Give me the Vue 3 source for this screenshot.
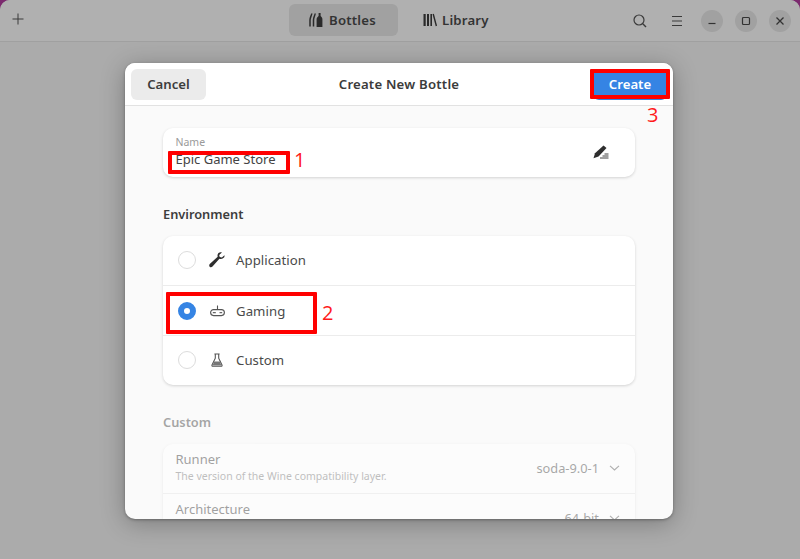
<script setup>
const envRows = [
  { label: 'Application', icon: 'wrench', checked: false },
  { label: 'Gaming', icon: 'game', checked: true },
  { label: 'Custom', icon: 'flask', checked: false },
]
</script>

<template>
  <div class="window">
    <header class="topbar">
      <button class="plus" aria-label="New">
        <svg width="12" height="12" viewBox="0 0 12 12"><path d="M6 0.5v11M0.5 6h11" stroke="#3a3a3a" stroke-width="1" fill="none"/></svg>
      </button>
      <nav class="tabs">
        <div class="tab active">
          <svg width="14" height="16" viewBox="0 0 14 16"><path d="M2.800 1.500C2.400 4 1 5.500 1 8v6.500M6.200 1.500C5.800 4 4.500 5.500 4.500 8v6.500" stroke="#2a2a2a" stroke-width="1.500" fill="none"/><path d="M9.600 1h2v3c1.100.8 1.800 2 1.800 3.300V15H7.600V7.300c0-1.300.9-2.500 2-3.300z" fill="#2a2a2a"/></svg>
          <span>Bottles</span>
        </div>
        <div class="tab lib">
          <svg width="14" height="14" viewBox="0 0 14 14"><path d="M.5 1v12h2.200V1zM4 1v12h2V1zM7.400 1v12h1.600V1z" fill="#2a2a2a"/><path d="M10.200 1l3.200 12" stroke="#2a2a2a" stroke-width="1.400" fill="none"/></svg>
          <span>Library</span>
        </div>
      </nav>
      <div class="actions">
        <svg class="search" width="14" height="14" viewBox="0 0 14 14"><circle cx="6" cy="6" r="5" stroke="#3a3a3a" stroke-width="1.200" fill="none"/><path d="M9.800 9.800L13 13" stroke="#3a3a3a" stroke-width="1.400" fill="none"/></svg>
        <svg class="menu" width="12" height="12" viewBox="0 0 12 12"><path d="M1 1.500h10M1 6h10M1 10.500h10" stroke="#3a3a3a" stroke-width="1.100" fill="none"/></svg>
        <span class="wbtn"><svg width="10" height="10" viewBox="0 0 10 10"><path d="M1.500 7.500h7" stroke="#333" stroke-width="1.200"/></svg></span>
        <span class="wbtn"><svg width="10" height="10" viewBox="0 0 10 10"><rect x="1.500" y="1.500" width="7" height="7" rx="1" stroke="#333" stroke-width="1.200" fill="none"/></svg></span>
        <span class="wbtn"><svg width="10" height="10" viewBox="0 0 10 10"><path d="M1.500 1.500l7 7M8.500 1.500l-7 7" stroke="#333" stroke-width="1.300"/></svg></span>
      </div>
    </header>

    <main class="content"></main>

    <section class="dialog">
      <div class="dialog-head">
        <button class="btn cancel">Cancel</button>
        <h1>Create New Bottle</h1>
        <button class="btn create">Create</button>
      </div>

      <div class="dialog-body">
        <div class="card name-card">
          <div class="name-text">
            <div class="name-label">Name</div>
            <div class="name-value">Epic Game Store</div>
          </div>
          <svg class="edit" width="16" height="14" viewBox="0 0 16 14"><path d="M10.500.5l3 2.500-8 8.500-5 1.700 1.500-4.900z" fill="#2e2e2e"/><path d="M7 13h8.500M9.500 11h6M11.500 9h4" stroke="#2e2e2e" stroke-width=".9"/></svg>
        </div>

        <h2 class="section">Environment</h2>
        <div class="card env-card">
          <div v-for="row in envRows" :key="row.label" class="env-row">
            <span class="radio" :class="{ on: row.checked }"></span>
            <span class="env-icon">
              <svg v-if="row.icon === 'wrench'" width="16" height="16" viewBox="0 0 16 16"><path d="M15.400 3.200l-2.500 2.300-2.200-.5-.5-2.100L12.900.5C10.900-.2 8.600 1 8.500 3.400c0 .6.100 1 .2 1.400L1 11.800c-1 .9-1 2.100-.3 2.900.8.800 2 .7 2.800-.2l6.900-7.700c2.800.8 5.900-1.300 5-3.600z" fill="#2e2e2e"/></svg>
              <svg v-else-if="row.icon === 'game'" width="15" height="13" viewBox="0 0 15 13"><rect x=".6" y="5.600" width="13.800" height="6" rx="3" stroke="#555" stroke-width="1.100" fill="none"/><path d="M7.500 5.600V1.500" stroke="#555" stroke-width="1.100"/><path d="M2.800 8.600h3M9.500 8.600h2.700" stroke="#666" stroke-width="1.200"/></svg>
              <svg v-else width="12" height="14" viewBox="0 0 12 14"><path d="M4.300 1v4.200L1 12c-.3.6.1 1.300.8 1.300h8.400c.7 0 1.100-.7.800-1.300L7.700 5.200V1M3.400 1h5.200" stroke="#555" stroke-width="1.100" fill="none"/><path d="M3.100 8.500h5.800l1.500 4H1.600z" fill="#777"/></svg>
            </span>
            <span class="env-label">{{ row.label }}</span>
          </div>
        </div>

        <div class="custom">
          <h2 class="section custom-title">Custom</h2>
          <div class="card custom-card">
            <div class="custom-row">
              <div>
                <div class="c-title">Runner</div>
                <div class="c-sub">The version of the Wine compatibility layer.</div>
              </div>
              <div class="c-value">soda-9.0-1<svg width="11" height="6" viewBox="0 0 11 6"><path d="M1 .8l4.500 4.200L10 .8" stroke="#555" stroke-width="1.100" fill="none"/></svg></div>
            </div>
            <div class="custom-row">
              <div>
                <div class="c-title">Architecture</div>
                <div class="c-sub">&nbsp;</div>
              </div>
              <div class="c-value">64-bit<svg width="11" height="6" viewBox="0 0 11 6"><path d="M1 .8l4.500 4.200L10 .8" stroke="#555" stroke-width="1.100" fill="none"/></svg></div>
            </div>
          </div>
        </div>
      </div>

      <div class="mark mark-name"></div>
      <span class="num num-1">1</span>
      <div class="mark mark-gaming"></div>
      <span class="num num-2">2</span>
      <div class="mark mark-create"></div>
      <span class="num num-3">3</span>
    </section>
  </div>
</template>

<style>
html, body { margin: 0; background: #7b2a6e; }
</style>

<style scoped>
.window {
  position: relative;
  width: 800px;
  height: 559px;
  overflow: hidden;
  display: flex;
  flex-direction: column;
  border-radius: 10px 10px 0 0;
  font-family: "Noto Sans", "Open Sans", sans-serif;
  font-size: 13.500px;
  color: #3d3d3d;
  background: #ababab;
}
.topbar {
  height: 41px;
  flex: none;
  border-bottom: 1px solid #a0a0a0;
  background: #b0b0b0;
  display: flex;
  align-items: center;
  position: relative;
}
.plus {
  all: unset;
  margin-left: 12px;
  width: 12px;
  height: 12px;
  display: flex;
  margin-top: -3px;
}
.tabs {
  position: absolute;
  left: 289px;
  top: 4px;
  display: flex;
  gap: 4px;
}
.tab {
  height: 32px;
  display: flex;
  align-items: center;
  gap: 6px;
  padding: 0 10px 0 21px;
  border-radius: 6px;
  font-weight: 600;
  font-size: 13.200px;
  color: #333;
  letter-spacing: .2px;
}
.tab.lib { padding-left: 21px; gap: 5px; }
.tab span { position: relative; top: -.5px; }
.tab.active { background: #a1a1a1; width: 109px; box-sizing: border-box; padding-left: 20px; }
.actions {
  margin-left: auto;
  margin-right: 9px;
  display: flex;
  align-items: center;
}
.search { margin-right: 24px; }
.menu { margin-right: 18px; }
.wbtn {
  width: 22px;
  height: 22px;
  border-radius: 50%;
  background: #a1a1a1;
  display: flex;
  align-items: center;
  justify-content: center;
  margin-left: 12px;
}
.menu + .wbtn { margin-left: 0; }
.content { flex: 1; background: #ababab; }

.dialog {
  position: absolute;
  left: 125px;
  top: 63px;
  width: 548px;
  height: 456px;
  border-radius: 10px;
  background: #fafafa;
  box-shadow: 0 4px 24px rgba(0, 0, 0, .28), 0 1px 3px rgba(0, 0, 0, .3);
  display: flex;
  flex-direction: column;
}
.dialog-head {
  height: 42px;
  flex: none;
  background: #fff;
  border-bottom: 1px solid #e2e2e2;
  border-radius: 10px 10px 0 0;
  display: flex;
  align-items: center;
  justify-content: space-between;
  padding: 0 6px;
}
.dialog-head h1 {
  margin: 0;
  font-size: 13.200px;
  font-weight: 600;
  color: #3b3b3b;
  letter-spacing: .2px;
  position: absolute;
  left: 0;
  right: 0;
  top: 12px;
  text-align: center;
  line-height: 18px;
}
.btn {
  all: unset;
  height: 31px;
  border-radius: 6px;
  font-weight: 600;
  font-size: 13.200px;
  line-height: 30px;
  text-align: center;
  box-sizing: border-box;
}
.cancel { width: 75px; background: #ebebeb; color: #3d3d3d; }
.create { width: 74px; background: #3584e4; color: #fff; }

.dialog-body {
  flex: 1;
  min-height: 0;
  overflow: hidden;
  padding: 22px 38px 0;
  border-radius: 0 0 10px 10px;
}
.card {
  background: #fff;
  border-radius: 10px;
  box-shadow: 0 1px 3px rgba(0, 0, 0, .16);
}
.name-card {
  height: 49px;
  display: flex;
  align-items: center;
  justify-content: space-between;
  padding: 0 26px 0 12.500px;
}
.name-label { font-size: 10.500px; color: #9a9a9a; line-height: 14px; margin-top: -2px; }
.name-value { font-size: 13px; color: #444; line-height: 17px; margin-top: 2px; }
.edit { margin-top: -1px; }
.section {
  margin: 0;
  font-size: 12.800px;
  font-weight: 600;
  color: #3d3d3d;
  line-height: 18px;
}
.dialog-body > .section { margin-top: 28px; margin-bottom: 13px; }
.env-card { height: 149px; }
.env-row {
  height: 50px;
  box-sizing: border-box;
  display: flex;
  align-items: center;
  padding-left: 15px;
  border-bottom: 1px solid #ececec;
}
.env-row:first-child { padding-bottom: 1px; }
.env-row:last-child { border-bottom: 0; height: 49px; padding-bottom: 1px; }
.radio {
  width: 18px;
  height: 18px;
  box-sizing: border-box;
  border-radius: 50%;
  border: 1.500px solid #dcdcdc;
  background: #fff;
  flex: none;
}
.radio.on { border: 6px solid #3584e4; }
.env-icon {
  width: 18px;
  margin-left: 12px;
  margin-right: 10px;
  display: flex;
  justify-content: center;
}
.env-label { font-size: 13.200px; color: #4a4a4a; letter-spacing: .05px; }
.custom { opacity: .45; margin-top: 28px; }
.custom-title { margin-bottom: 13px; }
.custom-row {
  height: 50px;
  box-sizing: border-box;
  display: flex;
  align-items: center;
  justify-content: space-between;
  padding: 0 15px 2px 12.500px;
  border-bottom: 1px solid #e4e4e4;
}
.c-title { font-size: 13px; line-height: 17px; color: #333; }
.c-sub { font-size: 10.500px; line-height: 15px; color: #777; margin-top: 1px; }
.c-value { display: flex; align-items: center; gap: 10px; font-size: 12.800px; color: #444; }

.mark {
  position: absolute;
  border: 4px solid #ff0000;
  border-radius: 1px;
  box-sizing: border-box;
  pointer-events: none;
}
.mark-name { left: 43px; top: 88px; width: 122px; height: 23px; }
.mark-gaming { left: 41px; top: 229px; width: 151px; height: 42px; }
.mark-create { left: 465px; top: 6px; width: 80px; height: 30px; }
.num {
  position: absolute;
  font-family: "Open Sans", sans-serif;
  font-weight: 400;
  font-size: 20px;
  line-height: 22px;
  color: #ff1a1a;
}
.num-1 { left: 169px; top: 86px; }
.num-2 { left: 197px; top: 239px; }
.num-3 { left: 522px; top: 41px; }
</style>
